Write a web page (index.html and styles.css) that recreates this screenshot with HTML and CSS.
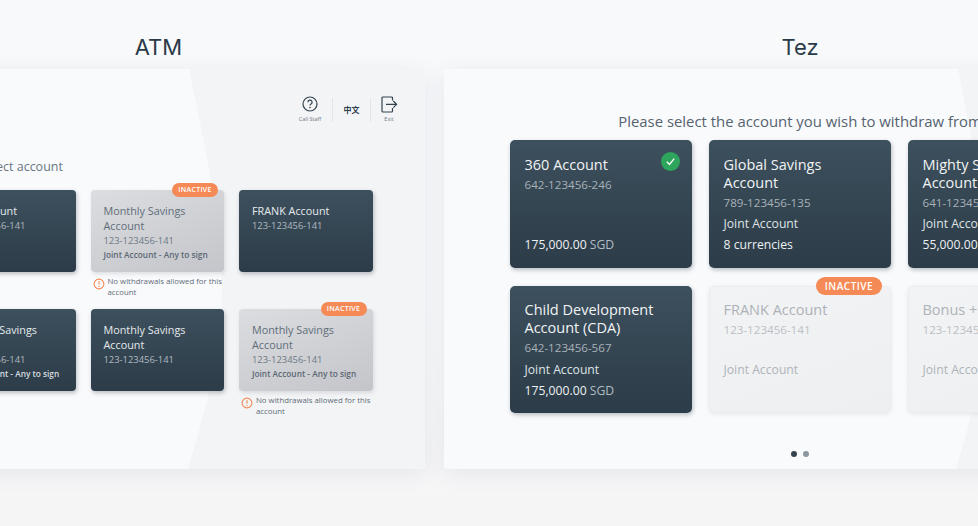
FILE: index.html
```html
<!DOCTYPE html>
<html lang="en">
<head>
<meta charset="utf-8">
<title>Account selection: ATM and Tez</title>
<link rel="stylesheet" href="styles.css">
</head>
<body>
<main class="stage">
  <section class="column column-atm">
    <h2 class="column-title">ATM</h2>
    <div class="panel panel-atm">
      <svg class="swoosh" viewBox="0 0 533 400" preserveAspectRatio="none" aria-hidden="true"><path d="M297 0C316 90 330 165 330 218C330 280 314 340 296 400H533V0Z"/></svg>
      <div class="toolbar">
        <div class="tool tool-wide">
          <svg class="tool-icon" viewBox="0 0 18 18" aria-hidden="true"><circle cx="9" cy="8" r="7" fill="none" stroke="#33434f" stroke-width="1.2"/><path d="M6.9 6.3A2.1 2.1 0 1 1 9.8 8.2C9.2 8.5 9 8.9 9 9.6" fill="none" stroke="#33434f" stroke-width="1.2"/><circle cx="9" cy="11.6" r=".8" fill="#33434f"/></svg>
          <span class="tool-label">Call Staff</span>
        </div>
        <span class="tool-divider"></span>
        <div class="tool tool-lang">中文</div>
        <span class="tool-divider"></span>
        <div class="tool">
          <svg class="tool-icon" viewBox="0 0 18 18" aria-hidden="true"><path d="M12.5 4.500V2a1 1 0 0 0-1-1H3a1 1 0 0 0-1 1v13a1 1 0 0 0 1 1h8.500a1 1 0 0 0 1-1v-3" fill="none" stroke="#33434f" stroke-width="1.200"/><path d="M6 8.300h10.500M13.300 5l3.300 3.300-3.300 3.300" fill="none" stroke="#33434f" stroke-width="1.200"/></svg>
          <span class="tool-label">Exit</span>
        </div>
      </div>
      <p class="prompt-atm">Please select account</p>
      <div class="grid-atm">
        <div class="cell">
          <article class="atm-card"><h3>360 Account</h3><p class="num">123-123456-141</p></article>
        </div>
        <div class="cell">
          <article class="atm-card atm-off"><span class="badge badge-sm">INACTIVE</span><h3>Monthly Savings Account</h3><p class="num">123-123456-141</p><p class="joint">Joint Account - Any to sign</p></article>
          <div class="note">
            <svg class="note-icon" viewBox="0 0 12 12" aria-hidden="true"><circle cx="6" cy="6" r="4.900" fill="none" stroke="#f58a56" stroke-width="1.100"/><path d="M6 3.200v3.400" stroke="#f58a56" stroke-width="1.200"/><circle cx="6" cy="8.400" r=".7" fill="#f58a56"/></svg>
            <span>No withdrawals allowed for this account</span>
          </div>
        </div>
        <div class="cell">
          <article class="atm-card"><h3>FRANK Account</h3><p class="num">123-123456-141</p></article>
        </div>
        <div class="cell">
          <article class="atm-card"><h3>Monthly Savings Account</h3><p class="num">123-123456-141</p><p class="joint">Joint Account - Any to sign</p></article>
        </div>
        <div class="cell">
          <article class="atm-card"><h3>Monthly Savings Account</h3><p class="num">123-123456-141</p></article>
        </div>
        <div class="cell">
          <article class="atm-card atm-off"><span class="badge badge-sm">INACTIVE</span><h3>Monthly Savings Account</h3><p class="num">123-123456-141</p><p class="joint">Joint Account - Any to sign</p></article>
          <div class="note">
            <svg class="note-icon" viewBox="0 0 12 12" aria-hidden="true"><circle cx="6" cy="6" r="4.900" fill="none" stroke="#f58a56" stroke-width="1.100"/><path d="M6 3.200v3.400" stroke="#f58a56" stroke-width="1.200"/><circle cx="6" cy="8.400" r=".7" fill="#f58a56"/></svg>
            <span>No withdrawals allowed for this account</span>
          </div>
        </div>
      </div>
    </div>
  </section>

  <section class="column column-tez">
    <h2 class="column-title">Tez</h2>
    <div class="panel panel-tez">
      <svg class="swoosh" viewBox="0 0 712 400" preserveAspectRatio="none" aria-hidden="true"><path d="M514 0C532 90 545 165 545 218C545 280 530 340 512 400H712V0Z"/></svg>
      <p class="prompt-tez">Please select the account you wish to withdraw from</p>
      <div class="grid-tez">
        <article class="tez-card">
          <svg class="check" viewBox="0 0 18 18" aria-hidden="true"><circle cx="9" cy="9" r="9" fill="#2ea55c"/><path d="M5.500 9.300l2.500 2.500 4.500-5.500" fill="none" stroke="#fff" stroke-width="1.300"/></svg>
          <h3>360 Account</h3><p class="num">642-123456-246</p>
          <div class="foot"><p class="line">&nbsp;</p><p class="line amount"><b>175,000.00</b> SGD</p></div>
        </article>
        <article class="tez-card">
          <h3>Global Savings Account</h3><p class="num">789-123456-135</p>
          <div class="foot"><p class="line">Joint Account</p><p class="line amount"><b>8 currencies</b></p></div>
        </article>
        <article class="tez-card">
          <h3>Mighty Savers Account</h3><p class="num">641-123456-141</p>
          <div class="foot"><p class="line">Joint Account</p><p class="line amount"><b>55,000.00</b> SGD</p></div>
        </article>
        <article class="tez-card">
          <h3>Child Development Account (CDA)</h3><p class="num">642-123456-567</p>
          <div class="foot"><p class="line">Joint Account</p><p class="line amount"><b>175,000.00</b> SGD</p></div>
        </article>
        <article class="tez-card tez-off">
          <span class="badge badge-lg">INACTIVE</span>
          <h3>FRANK Account</h3><p class="num">123-123456-141</p>
          <div class="foot"><p class="line">Joint Account</p><p class="line">&nbsp;</p></div>
        </article>
        <article class="tez-card tez-off">
          <h3>Bonus + Account</h3><p class="num">123-123456-141</p>
          <div class="foot"><p class="line">Joint Account</p><p class="line">&nbsp;</p></div>
        </article>
      </div>
      <div class="dots"><span class="dot dot-on"></span><span class="dot"></span></div>
    </div>
  </section>
</main>
</body>
</html>
```

FILE: styles.css
```css
* { box-sizing: border-box; }
html, body { margin: 0; height: 100%; }
body {
  width: 978px;
  height: 526px;
  overflow: hidden;
  background: linear-gradient(180deg, #f8f9fb 0%, #f8f9fb 60%, #f5f5f6 100%);
  font-family: "Open Sans", "Liberation Sans", sans-serif;
  color: #2f404d;
}
h2, h3, p { margin: 0; font-weight: inherit; }

.stage { display: flex; gap: 19px; margin-left: -108px; width: 1264px; }
.column { display: flex; flex-direction: column; }
.column-atm { width: 533px; }
.column-tez { width: 712px; }
.column-title {
  height: 69px;
  padding-top: 32px;
  text-align: center;
  font-family: Inter, "Liberation Sans", sans-serif;
  font-size: 22px;
  line-height: 30px;
  color: #2a3b48;
}

.panel {
  position: relative;
  height: 400px;
  border-radius: 3px;
  background: #f9fafc;
  box-shadow: 0 4px 22px rgba(60, 70, 85, .09);
  overflow: hidden;
}
.swoosh { position: absolute; inset: 0; width: 100%; height: 100%; }
.swoosh path { fill: #f3f4f6; }
.panel > *:not(.swoosh) { position: relative; }

.toolbar {
  display: flex;
  justify-content: flex-end;
  align-items: center;
  height: 53px;
  padding: 28px 18px 0 0;
}
.tool {
  display: flex;
  flex-direction: column;
  align-items: center;
  width: 36px;
}
.tool-wide { width: 44px; }
.tool-icon { width: 18px; height: 18px; }
.tool-label { margin-top: 2px; font-size: 5.5px; line-height: 7px; color: #6b7782; }
.tool-lang {
  width: 37px;
  font-family: "Noto Sans CJK SC", sans-serif;
  font-size: 8px;
  font-weight: 700;
  line-height: 25px;
}
.tool-divider { width: 1px; height: 24px; background: #e3e5e8; }

.prompt-atm {
  margin: 36px 0 0 47px;
  font-size: 12.500px;
  line-height: 18px;
  color: #6b7781;
}
.grid-atm {
  display: grid;
  grid-template-columns: repeat(3, 133.500px);
  grid-auto-rows: 82px;
  column-gap: 15px;
  row-gap: 37px;
  margin: 14px 0 0 50px;
}
.cell { position: relative; }
.atm-card {
  position: relative;
  height: 82px;
  padding: 13px 12px 0 13px;
  border-radius: 4px;
  background: linear-gradient(180deg, #3d505d 0%, #2c3c48 100%);
  box-shadow: 1px 2px 4px rgba(40, 50, 60, .3);
  color: #e6eaed;
}
.atm-card h3 { font-size: 10.800px; line-height: 15px; font-weight: 500; }
.atm-card .num { margin-top: 1px; font-size: 9.400px; line-height: 14px; color: #b0b9c0; }
.atm-card .joint { font-size: 8.300px; line-height: 14px; font-weight: 600; color: #d8dde0; }
.atm-off {
  background: linear-gradient(160deg, #dcdde0 0%, #c3c5ca 100%);
  box-shadow: 1px 2px 4px rgba(60, 70, 80, .15);
  color: #606d79;
}
.atm-off .num { color: #6d7984; }
.atm-off .joint { color: #5b6773; }

.badge {
  position: absolute;
  border-radius: 10px;
  background: #f58a56;
  color: #fff;
  font-weight: 600;
  text-align: center;
}
.badge-sm { top: -7px; right: 6px; width: 46px; height: 14px; font-size: 7px; line-height: 14px; letter-spacing: .3px; }
.badge-lg { top: -10px; right: 8px; width: 66px; height: 18px; font-size: 10px; line-height: 18px; letter-spacing: .5px; }

.note {
  position: absolute;
  top: 86px;
  left: 2px;
  display: flex;
  gap: 3px;
  width: 134px;
  font-size: 7.800px;
  line-height: 11px;
  color: #5f6c77;
}
.note-icon { flex: none; width: 12px; height: 12px; margin-top: 2px; }

.prompt-tez {
  margin-top: 42px;
  text-align: center;
  font-size: 14.900px;
  line-height: 20px;
  color: #55636f;
}
.grid-tez {
  display: grid;
  grid-template-columns: repeat(3, 182px);
  grid-auto-rows: 127.500px;
  column-gap: 17px;
  row-gap: 18px;
  margin: 9px 0 0 66px;
}
.tez-card {
  position: relative;
  display: flex;
  flex-direction: column;
  padding: 15.500px 14.500px 12.500px;
  border-radius: 5px;
  background: linear-gradient(180deg, #3d505d 0%, #2c3c48 100%);
  box-shadow: 1px 2px 4px rgba(40, 50, 60, .3);
  color: #dfe3e6;
}
.tez-card h3 { max-width: 138px; font-size: 14.500px; line-height: 18px; font-weight: 500; color: #f1f3f5; }
.tez-card .num { margin-top: 2px; font-size: 11.600px; line-height: 18px; color: #a8b2b9; }
.foot { margin-top: auto; }
.line { font-size: 12.200px; line-height: 21px; }
.amount { color: #b3bcc3; }
.amount b { font-weight: 500; color: #eef1f3; }
.check { position: absolute; top: 11.500px; right: 12px; width: 19px; height: 19px; }
.tez-off {
  border: 1px solid #ebecef;
  padding: 14.500px 13.500px 11.500px;
  background: linear-gradient(160deg, #f2f3f5 0%, #eeeff1 100%);
  box-shadow: 0 1px 4px rgba(60, 70, 80, .1);
  color: #afb4ba;
}
.tez-off h3 { color: #adb2b8; }
.tez-off .num { color: #bbbfc5; }

.dots { display: flex; justify-content: center; gap: 6px; margin-top: 38px; }
.dot { width: 6px; height: 6px; border-radius: 50%; background: #8b98a2; }
.dot-on { background: #33434f; }
```
